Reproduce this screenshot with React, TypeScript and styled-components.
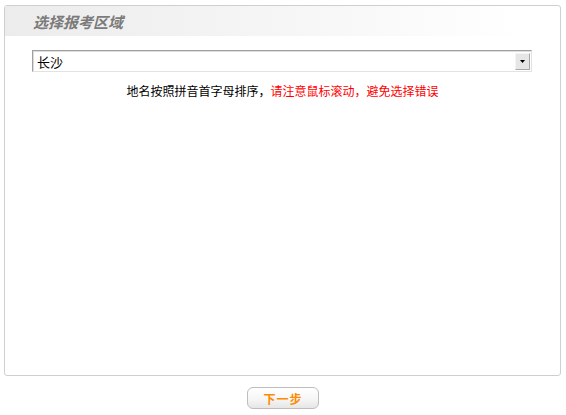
import React from "react";
import styled, { createGlobalStyle } from "styled-components";

const Global = createGlobalStyle`
  html, body { margin: 0; padding: 0; background: #fff; }
  body { font-family: "Noto Sans CJK SC", "Liberation Sans", sans-serif; font-size: 12px; }
`;

const Page = styled.div`
  width: 566px;
  height: 415px;
  padding: 5px 0 0 4px;
  box-sizing: border-box;
  display: flex;
  flex-direction: column;
  align-items: flex-start;
`;

const Panel = styled.div`
  width: 557px;
  height: 371px;
  box-sizing: border-box;
  border: 1px solid #cfcfcf;
  border-radius: 3px;
  display: flex;
  flex-direction: column;
`;

const Header = styled.div`
  width: 520px;
  height: 30px;
  background: linear-gradient(to right, #ececec 0%, #f5f5f5 50%, #ffffff 100%);
  display: flex;
  align-items: center;
  padding-left: 28px;
  box-sizing: border-box;
`;

const Title = styled.h2`
  margin: 0;
  font-size: 15px;
  font-weight: bold;
  font-style: italic;
  color: #7b7b7b;
`;

const SelectRow = styled.div`
  padding: 14px 28px 0 27px;
`;

const SelectBox = styled.div`
  height: 22px;
  box-sizing: border-box;
  border: 1px solid;
  border-color: #a0a0a0 #e2e2e2 #e2e2e2 #a0a0a0;
  box-shadow: inset 1px 1px 0 #dcdcdc;
  display: flex;
  align-items: center;
  justify-content: space-between;
  padding: 0 1px 0 4px;
  background: #fff;
`;

const SelectText = styled.span`
  font-size: 13px;
  color: #000;
`;

const ArrowButton = styled.div`
  width: 15px;
  height: 17px;
  box-sizing: border-box;
  background: #e6e6e6;
  border: 1px solid;
  border-color: #f4f4f4 #a8a8a8 #a8a8a8 #f4f4f4;
  display: flex;
  align-items: center;
  justify-content: center;
`;

const Hint = styled.p`
  margin: 11px 0 0;
  text-align: center;
  font-size: 12px;
  line-height: 16px;
  color: #000;
`;

const Warn = styled.span`
  color: #ff0000;
`;

const Footer = styled.div`
  width: 557px;
  display: flex;
  justify-content: center;
  padding-top: 11px;
`;

const NextButton = styled.button`
  width: 72px;
  height: 22px;
  margin-left: 1px;
  border: 1px solid #bdbdbd;
  border-radius: 6px;
  background: linear-gradient(to bottom, #ffffff 0%, #f6f6f6 55%, #e6e6e6 100%);
  color: #ff8a00;
  font-family: "Noto Sans CJK SC", sans-serif;
  font-weight: bold;
  font-size: 12px;
  letter-spacing: 1px;
  padding: 0;
  cursor: pointer;
`;

export default function App() {
  return (
    <>
      <Global />
      <Page>
        <Panel>
          <Header>
            <Title>选择报考区域</Title>
          </Header>
          <SelectRow>
            <SelectBox>
              <SelectText>长沙</SelectText>
              <ArrowButton>
                <svg width="5" height="3" viewBox="0 0 5 3">
                  <polygon points="0,0 5,0 2.5,3" fill="#000" />
                </svg>
              </ArrowButton>
            </SelectBox>
          </SelectRow>
          <Hint>
            地名按照拼音首字母排序，<Warn>请注意鼠标滚动，避免选择错误</Warn>
          </Hint>
        </Panel>
        <Footer>
          <NextButton>下一步</NextButton>
        </Footer>
      </Page>
    </>
  );
}
